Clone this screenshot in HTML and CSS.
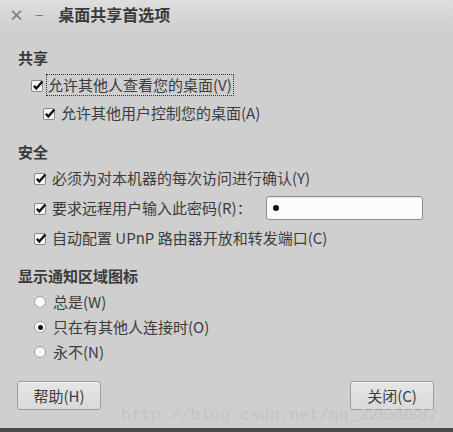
FILE: index.html
```html
<!DOCTYPE html>
<html lang="zh-CN">
<head>
    <meta charset="UTF-8">
    <title>桌面共享首选项</title>
    <link rel="stylesheet" href="styles.css">
</head>
<body>
    <div class="window">
        <header class="titlebar">
            <span class="wbtn close">×</span>
            <span class="wbtn min">−</span>
            <span class="title">桌面共享首选项</span>
        </header>

        <div class="content">
            <h2 class="group">共享</h2>
            <label class="row row-top">
                <span class="check"><svg viewBox="0 0 15 15" width="15" height="15"><rect x="1.5" y="2.5" width="11" height="11" rx="1.5" fill="#f6f6f6" stroke="#8a8a8a"/><path d="M3.8 7.8 L6.3 10.6 L12.4 3.4" fill="none" stroke="#111" stroke-width="2.3"/></svg></span>
                <span class="text focused">允许其他人查看您的桌面(V)</span>
            </label>
            <label class="row row-sub">
                <span class="check"><svg viewBox="0 0 15 15" width="15" height="15"><rect x="1.5" y="2.5" width="11" height="11" rx="1.5" fill="#f6f6f6" stroke="#8a8a8a"/><path d="M3.8 7.8 L6.3 10.6 L12.4 3.4" fill="none" stroke="#111" stroke-width="2.3"/></svg></span>
                <span class="text">允许其他用户控制您的桌面(A)</span>
            </label>

            <h2 class="group group-2">安全</h2>
            <label class="row">
                <span class="check"><svg viewBox="0 0 15 15" width="15" height="15"><rect x="1.5" y="2.5" width="11" height="11" rx="1.5" fill="#f6f6f6" stroke="#8a8a8a"/><path d="M3.8 7.8 L6.3 10.6 L12.4 3.4" fill="none" stroke="#111" stroke-width="2.3"/></svg></span>
                <span class="text">必须为对本机器的每次访问进行确认(Y)</span>
            </label>
            <label class="row row-gap">
                <span class="check"><svg viewBox="0 0 15 15" width="15" height="15"><rect x="1.5" y="2.5" width="11" height="11" rx="1.5" fill="#f6f6f6" stroke="#8a8a8a"/><path d="M3.8 7.8 L6.3 10.6 L12.4 3.4" fill="none" stroke="#111" stroke-width="2.3"/></svg></span>
                <span class="text">要求远程用户输入此密码(R)：</span>
                <span class="entry"><span class="dot"></span></span>
            </label>
            <label class="row row-gap">
                <span class="check"><svg viewBox="0 0 15 15" width="15" height="15"><rect x="1.5" y="2.5" width="11" height="11" rx="1.5" fill="#f6f6f6" stroke="#8a8a8a"/><path d="M3.8 7.8 L6.3 10.6 L12.4 3.4" fill="none" stroke="#111" stroke-width="2.3"/></svg></span>
                <span class="text">自动配置 UPnP 路由器开放和转发端口(C)</span>
            </label>

            <h2 class="group group-3">显示通知区域图标</h2>
            <label class="row">
                <span class="radio"></span>
                <span class="text">总是(W)</span>
            </label>
            <label class="row row-radio">
                <span class="radio on"></span>
                <span class="text">只在有其他人连接时(O)</span>
            </label>
            <label class="row row-radio">
                <span class="radio"></span>
                <span class="text">永不(N)</span>
            </label>

            <div class="buttons">
                <button class="btn">帮助(H)</button>
                <button class="btn">关闭(C)</button>
            </div>
        </div>

        <div class="watermark">http://blog.csdn.net/qq_32659887</div>
        <div class="bottom-strip"></div>
    </div>
</body>
</html>
```

FILE: styles.css
```css
body {
    margin: 0;
    padding: 0;
    background-color: #cfcfcf;
    font-family: "Noto Sans CJK SC", "Noto Sans", sans-serif;
    font-size: 15px;
    color: #3c3c3c;
}
.window {
    position: relative;
    width: 453px;
    height: 432px;
    overflow: hidden;
    background: #cfcfcf;
}
.titlebar {
    height: 28px;
    display: flex;
    align-items: center;
    background: linear-gradient(#dedede, #d0d0d0);
}
.wbtn {
    color: #7c7c7c;
    font-size: 15px;
    line-height: 1;
}
.close {
    margin-left: 9px;
    font-weight: bold;
}
.min {
    margin-left: 11px;
}
.title {
    margin-left: 15px;
    font-weight: bold;
    font-size: 16px;
    color: #3a3a3a;
}
.content {
    display: flex;
    flex-direction: column;
    padding-left: 18px;
}
.group {
    margin: 20px 0 0 0;
    height: 20px;
    line-height: 20px;
    font-size: 15px;
    font-weight: bold;
    color: #3a3a3a;
}
.group-2 {
    margin-top: 17px;
}
.group-3 {
    margin-top: 16px;
}
.row {
    display: flex;
    align-items: center;
    height: 24px;
    margin-top: 4px;
    padding-left: 15px;
    white-space: nowrap;
}
.row-top {
    margin-top: 5px;
    padding-left: 12px;
}
.row-sub {
    padding-left: 24px;
}
.row-gap {
    margin-top: 6px;
}
.row-radio {
    margin-top: 1px;
}
.check {
    width: 15px;
    height: 15px;
    margin-right: 4px;
    display: flex;
}
.text {
    line-height: 20px;
}
.focused {
    outline: 1px dotted #333;
    outline-offset: 0;
    padding: 0 1px;
    margin-left: -2px;
}
.entry {
    margin-left: 14px;
    width: 155px;
    height: 22px;
    background: #fbfbfb;
    border: 1px solid #8e8e8e;
    border-radius: 3px;
    display: flex;
    align-items: center;
    box-shadow: inset 0 1px 1px rgba(0,0,0,0.08);
}
.dot {
    width: 6px;
    height: 6px;
    margin-left: 6px;
    border-radius: 50%;
    background: #111;
}
.radio {
    width: 10px;
    height: 10px;
    margin: 0 7px 0 1px;
    border: 1px solid #a0a0a0;
    border-radius: 50%;
    background: #fafafa;
    display: flex;
    align-items: center;
    justify-content: center;
}
.radio.on::after {
    content: "";
    width: 5px;
    height: 5px;
    border-radius: 50%;
    background: #111;
}
.buttons {
    margin-top: 17px;
    display: flex;
    justify-content: space-between;
    padding-right: 19px;
    margin-left: -1px;
}
.btn {
    width: 84px;
    height: 29px;
    font-family: inherit;
    font-size: 15px;
    color: #3c3c3c;
    background: linear-gradient(#e6e6e6, #d9d9d9);
    border: 1px solid #9c9c9c;
    border-radius: 3px;
    box-shadow: inset 0 1px 0 rgba(255,255,255,0.5);
    padding: 0;
}
.watermark {
    position: absolute;
    left: 121px;
    top: 406px;
    font-family: "Liberation Mono", monospace;
    font-size: 16.5px;
    line-height: 20px;
    color: #c3c3c3;
    white-space: nowrap;
}
.bottom-strip {
    position: absolute;
    left: 0;
    right: 0;
    bottom: 0;
    height: 4px;
    background: #4a4a4a;
}
```
